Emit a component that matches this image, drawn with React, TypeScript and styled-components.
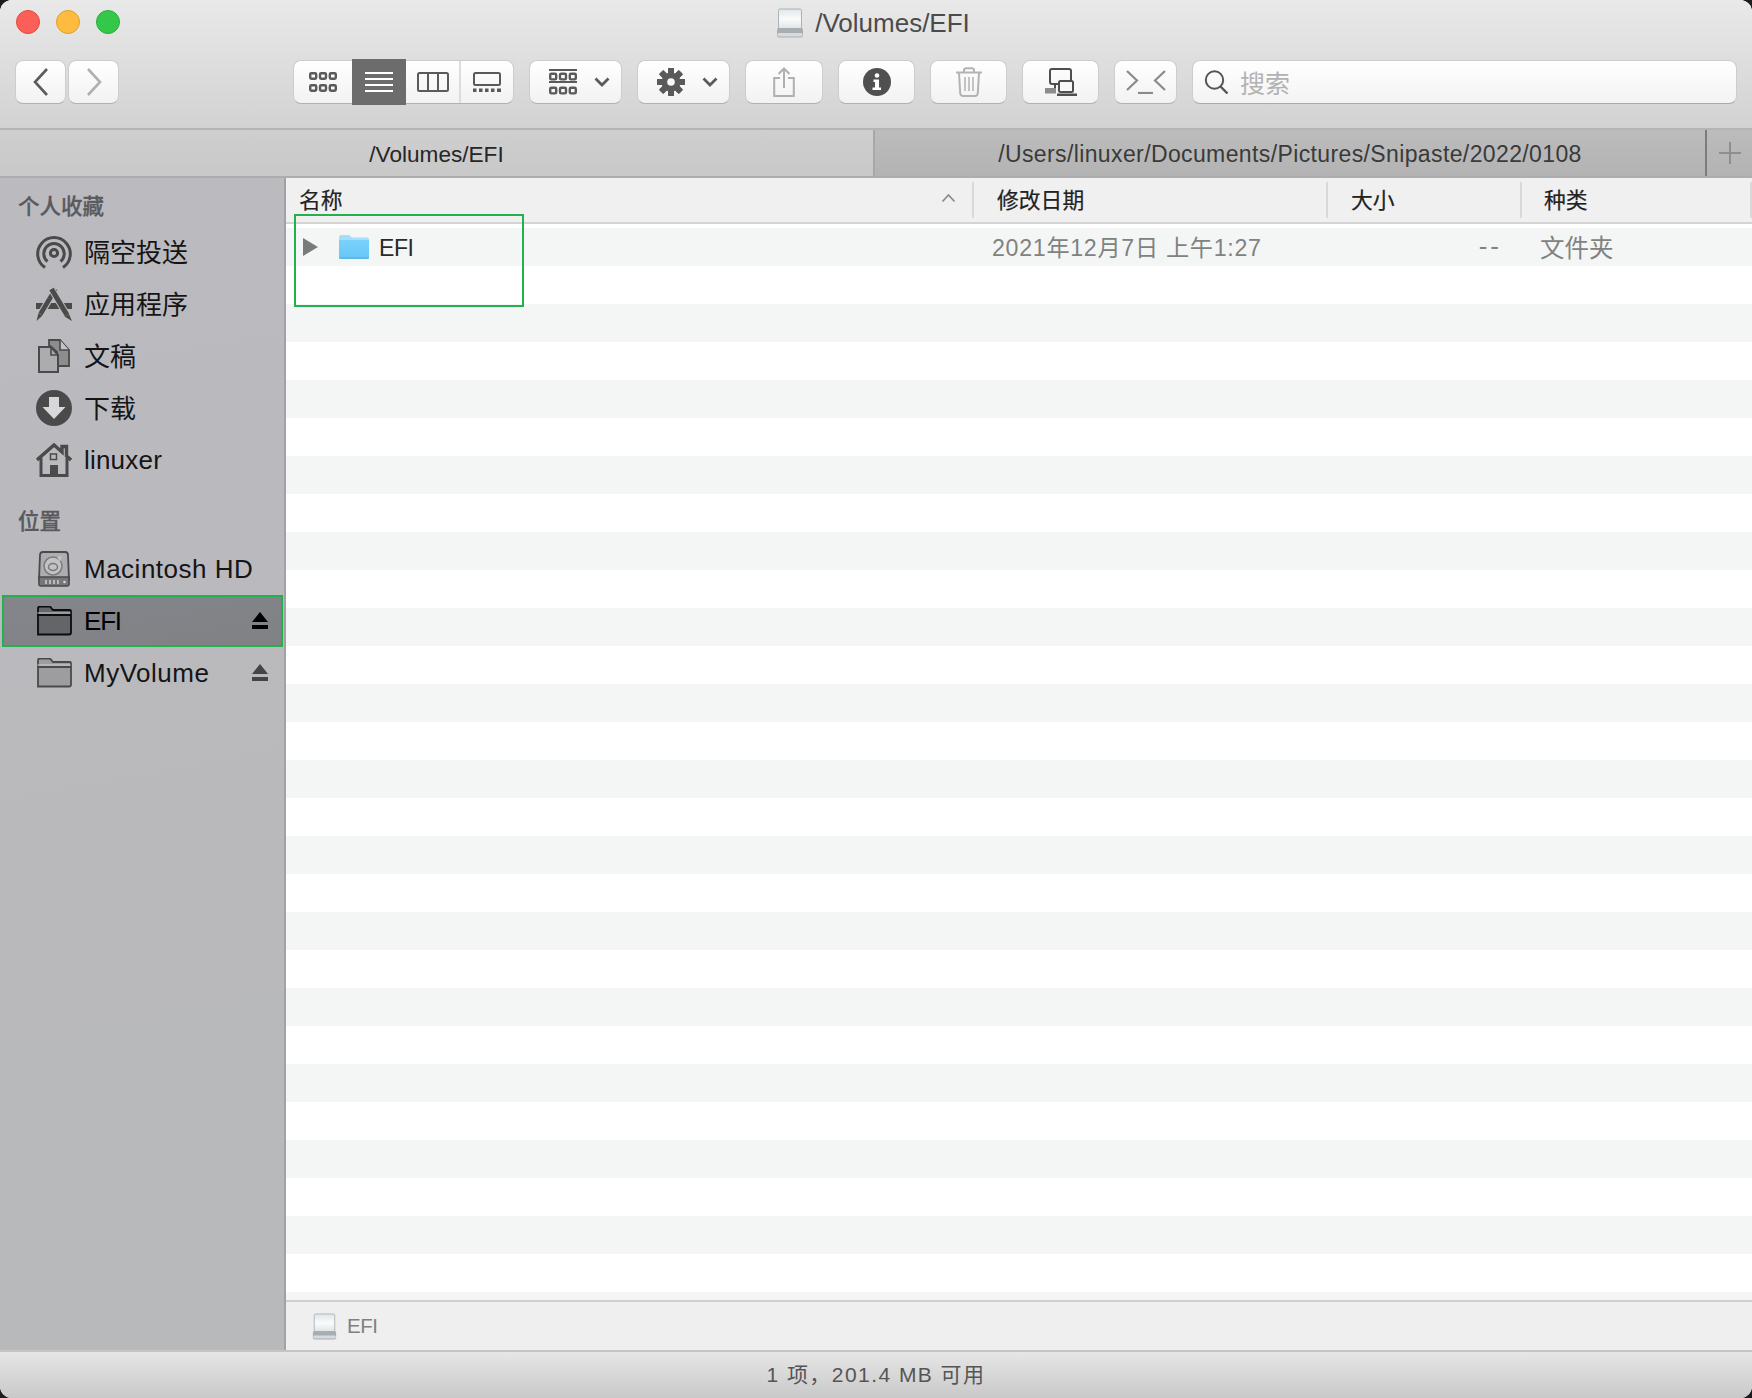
import React from "react";
import styled, { createGlobalStyle } from "styled-components";

const FONT = `"Liberation Sans", "Noto Sans CJK SC", sans-serif`;

const GlobalStyle = createGlobalStyle`
  html, body {
    margin: 0;
    padding: 0;
    background: #1d1d1f;
  }
  body {
    font-family: ${FONT};
  }
`;

const Window = styled.div`
  width: 1752px;
  height: 1398px;
  border-radius: 12px;
  overflow: hidden;
  display: flex;
  flex-direction: column;
  background: #fff;
  position: relative;
`;

const TitleBar = styled.div`
  height: 130px;
  box-sizing: border-box;
  flex: none;
  background: linear-gradient(#e9e9e9, #d2d2d2);
  border-bottom: 2px solid #b4b4b4;
`;

const TitleRow = styled.div`
  height: 46px;
  display: grid;
  grid-template-columns: 1fr auto 1fr;
  align-items: center;
  padding-left: 16px;
`;

const Lights = styled.div`
  display: flex;
  gap: 16px;
  margin-top: -2px;
`;

const Light = styled.span<{ $c: string; $b: string }>`
  width: 24px;
  height: 24px;
  border-radius: 50%;
  box-sizing: border-box;
  background: ${(p) => p.$c};
  border: 1px solid ${(p) => p.$b};
`;

const Title = styled.div`
  display: flex;
  align-items: center;
  gap: 11px;
  font-size: 26px;
  color: #4b4b4b;
  margin-right: 22px;
`;

const Toolbar = styled.div`
  display: flex;
  gap: 15px;
  padding: 14px 15px 0 15px;
  align-items: flex-start;
`;

const NavGroup = styled.div`
  display: flex;
  gap: 2px;
  margin-right: 159px;
`;

const Btn = styled.div<{ $w: number; $gap?: number; $shift?: number }>`
  width: ${(p) => p.$w}px;
  height: 44px;
  box-sizing: border-box;
  flex: none;
  display: flex;
  align-items: center;
  justify-content: center;
  gap: ${(p) => p.$gap || 0}px;
  padding-left: ${(p) => p.$shift || 0}px;
  border-radius: 8px;
  background: linear-gradient(#ffffff, #f2f2f2);
  border: 1px solid #cdcdcd;
  border-bottom-color: #b2b2b2;
`;

const Segments = styled.div`
  display: flex;
  width: 221px;
  height: 44px;
  box-sizing: border-box;
  border-radius: 8px;
  background: linear-gradient(#ffffff, #f2f2f2);
  border: 1px solid #cdcdcd;
  border-bottom-color: #b2b2b2;
`;

const Segment = styled.div<{ $w: number; $on?: boolean; $sep?: boolean }>`
  width: ${(p) => p.$w}px;
  flex: none;
  display: flex;
  align-items: center;
  justify-content: center;
  box-sizing: border-box;
  ${(p) => (p.$on ? "background: #6c6c6c; margin: -2px 0; height: 46px;" : "")}
  ${(p) => (p.$sep ? "border-left: 2px solid #dcdcdc;" : "")}
`;

const Search = styled.div`
  flex: 1;
  height: 44px;
  box-sizing: border-box;
  display: flex;
  align-items: center;
  gap: 10px;
  padding-left: 11px;
  border-radius: 8px;
  background: linear-gradient(#ffffff, #f3f3f3);
  border: 1px solid #cdcdcd;
  border-bottom-color: #a9a9a9;
  color: #b2b2b2;
  font-size: 25px;
`;

const Tabs = styled.div`
  height: 48px;
  flex: none;
  box-sizing: border-box;
  display: flex;
  border-bottom: 2px solid #adadad;
`;

const Tab = styled.div<{ $w: string; $active?: boolean }>`
  width: ${(p) => p.$w};
  box-sizing: border-box;
  display: flex;
  align-items: center;
  justify-content: center;
  padding-top: 3px;
  font-size: ${(p) => (p.$active ? "22.6px" : "23px")};
  letter-spacing: ${(p) => (p.$active ? "0" : "0.38px")};
  color: ${(p) => (p.$active ? "#262626" : "#3a3a3a")};
  background: ${(p) => (p.$active ? "linear-gradient(#cfcfcf, #c8c8c8)" : "linear-gradient(#bcbcbc, #b3b3b3)")};
  ${(p) => (p.$active ? "border-right: 2px solid #a8a8a8;" : "")}
`;

const AddTab = styled.div`
  flex: 1;
  box-sizing: border-box;
  display: flex;
  align-items: center;
  justify-content: center;
  background: linear-gradient(#bcbcbc, #b3b3b3);
  border-left: 2px solid #7c7c7c;
`;

const Body = styled.div`
  flex: 1;
  min-height: 0;
  display: flex;
`;

const Sidebar = styled.div`
  width: 286px;
  flex: none;
  box-sizing: border-box;
  border-right: 2px solid #a2a2a5;
  background: linear-gradient(170deg, #bbbabf, #b8b9ba);
`;

const SectionTitle = styled.div<{ $h: number; $top: number }>`
  height: ${(p) => p.$h}px;
  box-sizing: border-box;
  padding: ${(p) => p.$top}px 0 0 18px;
  display: flex;
  align-items: center;
  font-size: 21.5px;
  font-weight: 500;
  color: #5a5a5e;
  -webkit-text-stroke: 0.3px #5a5a5e;
`;

const SideRow = styled.div<{ $on?: boolean }>`
  height: 52px;
  box-sizing: border-box;
  margin: 0 1px 0 2px;
  padding: 0 15px 0 34px;
  display: flex;
  align-items: center;
  font-size: 26px;
  color: #151515;
  ${(p) =>
    p.$on
      ? `background: linear-gradient(170deg, #85868b, #808185);
         outline: 2px solid #22b14c;
         outline-offset: -2px;
         color: #000;`
      : ""}
`;

const SideIcon = styled.div`
  width: 36px;
  height: 36px;
  flex: none;
  margin-right: 12px;
  display: flex;
  align-items: center;
  justify-content: center;
`;

// CJK glyphs of the fallback font sit a little low next to the icons
const SideLabel = styled.span<{ $cjk?: boolean; $ls?: number }>`
  flex: 1;
  letter-spacing: ${(p) => (p.$ls !== undefined ? p.$ls : 0.5)}px;
  padding-bottom: ${(p) => (p.$cjk ? 4 : 0)}px;
`;

const COLS = "688px 354px 194px 1fr";

const Main = styled.div`
  flex: 1;
  min-width: 0;
  display: flex;
  flex-direction: column;
`;

const HeaderRow = styled.div`
  height: 46px;
  flex: none;
  box-sizing: border-box;
  display: grid;
  grid-template-columns: ${COLS};
  align-items: center;
  background: #f0f0f0;
  border-bottom: 2px solid #d4d4d4;
`;

const HeaderCell = styled.div<{ $pad: number }>`
  height: 36px;
  box-sizing: border-box;
  display: flex;
  align-items: center;
  justify-content: space-between;
  padding: 0 16px 4px ${(p) => p.$pad}px;
  border-right: 2px solid #d9d9d9;
  font-size: 21.8px;
  color: #222;
  -webkit-text-stroke: 0.2px #222;
`;

const Rows = styled.div`
  flex: 1;
  min-height: 0;
  overflow: hidden;
  padding-top: 4px;
`;

const Row = styled.div<{ $odd: boolean }>`
  height: 38px;
  display: grid;
  grid-template-columns: ${COLS};
  align-items: center;
  background: ${(p) => (p.$odd ? "#f4f6f5" : "#ffffff")};
`;

const NameCell = styled.div`
  display: flex;
  align-items: center;
  padding-left: 17px;
  font-size: 23px;
  color: #2a2a2a;
`;

const NameText = styled.span`
  padding-top: 2px;
  letter-spacing: -0.4px;
`;

const GrayCell = styled.div<{ $pad?: number; $right?: number; $ls?: number; $size?: number }>`
  font-size: ${(p) => p.$size || 23.2}px;
  letter-spacing: ${(p) => p.$ls || 0}px;
  color: #808282;
  white-space: nowrap;
  padding-left: ${(p) => p.$pad || 0}px;
  padding-right: ${(p) => p.$right || 0}px;
  padding-bottom: 2px;
  text-align: ${(p) => (p.$right ? "right" : "left")};
`;

const PathBar = styled.div`
  height: 50px;
  flex: none;
  box-sizing: border-box;
  display: flex;
  align-items: center;
  gap: 10px;
  padding-left: 26px;
  border-top: 2px solid #cdcfcf;
  background: #efefef;
  font-size: 20.5px;
  letter-spacing: -0.5px;
  color: #808080;
`;

const StatusBar = styled.div`
  height: 48px;
  flex: none;
  box-sizing: border-box;
  display: flex;
  align-items: center;
  justify-content: center;
  padding-bottom: 4px;
  border-top: 2px solid #c4c4c4;
  background: linear-gradient(#e6e6e6, #c9c9c9);
  font-size: 21px;
  letter-spacing: 1.45px;
  color: #555;
`;

const Highlight = styled.div`
  position: absolute;
  left: 294px;
  top: 214px;
  width: 230px;
  height: 93px;
  box-sizing: border-box;
  border: 2px solid #22b14c;
`;

const ICON = "#5a5a5a";

function Disk({ w, h }: { w: number; h: number }) {
  return (
    <svg width={w} height={h} viewBox="0 0 28 30">
      <defs>
        <linearGradient id="dk" x1="0" y1="0" x2="0" y2="1">
          <stop offset="0" stopColor="#dfe6e8" />
          <stop offset="0.5" stopColor="#fafbfb" />
          <stop offset="1" stopColor="#dfe3e5" />
        </linearGradient>
      </defs>
      <path d="M4 1h20a1.500 1.500 0 0 1 1.500 1.500V21h-23V2.500A1.500 1.500 0 0 1 4 1z" fill="url(#dk)" stroke="#a9b2b6" strokeWidth="1" />
      <path d="M2 20h24l1 2v5.500a2 2 0 0 1-2 2H3a2 2 0 0 1-2-2V22z" fill="#a8adb0" />
      <rect x="1.500" y="25" width="25" height="3.500" rx="1.500" fill="#d5dcdf" />
    </svg>
  );
}

function Back({ color }: { color: string }) {
  return (
    <svg width="18" height="30" viewBox="0 0 18 30">
      <path d="M15 2L3 15l12 13" fill="none" stroke={color} strokeWidth="2.600" />
    </svg>
  );
}

function Forward({ color }: { color: string }) {
  return (
    <svg width="18" height="30" viewBox="0 0 18 30">
      <path d="M3 2l12 13L3 28" fill="none" stroke={color} strokeWidth="2.600" />
    </svg>
  );
}

function Chevron() {
  return (
    <svg width="16" height="10" viewBox="0 0 16 10">
      <path d="M1.500 1.500L8 8l6.500-6.500" fill="none" stroke={ICON} strokeWidth="2.800" />
    </svg>
  );
}

function SixBoxes({ y = 0 }: { y?: number }) {
  const xs = [1.200, 11, 20.800];
  return (
    <g fill="none" stroke={ICON} strokeWidth="2.400">
      {xs.map((x) => (
        <rect key={x} x={x} y={y} width="6" height="5.600" rx="1.200" />
      ))}
    </g>
  );
}

function IconGrid() {
  return (
    <svg width="28" height="20" viewBox="0 0 28 20">
      <SixBoxes y={1.200} />
      <SixBoxes y={13.200} />
    </svg>
  );
}

function IconList() {
  return (
    <svg width="28" height="20" viewBox="0 0 28 20">
      <path d="M0 1h28M0 7h28M0 13h28M0 19h28" stroke="#fff" strokeWidth="1.800" />
    </svg>
  );
}

function IconColumns() {
  return (
    <svg width="32" height="20" viewBox="0 0 32 20">
      <rect x="1" y="1" width="30" height="18" rx="1.500" fill="none" stroke={ICON} strokeWidth="2" />
      <path d="M11 1v18M21 1v18" stroke={ICON} strokeWidth="2" />
    </svg>
  );
}

function IconGallery() {
  return (
    <svg width="28" height="20" viewBox="0 0 28 20">
      <rect x="1" y="1" width="26" height="12" rx="1.500" fill="none" stroke={ICON} strokeWidth="2" />
      <g fill={ICON}>
        <rect x="0" y="16.500" width="3.500" height="3.500" />
        <rect x="6" y="16.500" width="3.500" height="3.500" />
        <rect x="12" y="16.500" width="3.500" height="3.500" />
        <rect x="18" y="16.500" width="3.500" height="3.500" />
        <rect x="24" y="16.500" width="4" height="3.500" />
      </g>
    </svg>
  );
}

function IconArrange() {
  return (
    <svg width="28" height="26" viewBox="0 0 28 26">
      <path d="M0 1h28M0 13h28" stroke={ICON} strokeWidth="1.800" />
      <SixBoxes y={4.800} />
      <SixBoxes y={18.800} />
    </svg>
  );
}

function IconGear() {
  const teeth = [0, 45, 90, 135, 180, 225, 270, 315];
  return (
    <svg width="28" height="28" viewBox="0 0 28 28">
      <g fill={ICON}>
        {teeth.map((a) => (
          <rect key={a} x="11" y="0" width="6" height="28" rx="1" transform={`rotate(${a} 14 14)`} />
        ))}
      </g>
      <circle cx="14" cy="14" r="9.500" fill={ICON} />
      <circle cx="14" cy="14" r="3.800" fill="#f8f8f8" />
    </svg>
  );
}

function IconShare() {
  return (
    <svg width="22" height="30" viewBox="0 0 22 30">
      <path d="M7 11H1.200v18h19.600V11H15" fill="none" stroke="#b0b0b0" strokeWidth="2" />
      <path d="M11 21V2M5.500 7L11 1.500 16.500 7" fill="none" stroke="#b0b0b0" strokeWidth="2" />
    </svg>
  );
}

function IconInfo() {
  return (
    <svg width="28" height="28" viewBox="0 0 28 28">
      <circle cx="14" cy="14" r="14" fill="#505050" />
      <circle cx="14" cy="7.500" r="2.300" fill="#fff" />
      <path d="M10.500 11.500h5.500v8h2v2.500h-8.500v-2.500h2.500v-5.500h-1.500z" fill="#fff" />
    </svg>
  );
}

function IconTrash() {
  return (
    <svg width="26" height="30" viewBox="0 0 26 30">
      <path d="M0 5.500h26M8 5.500V3.500q0-2.200 2.200-2.200h5.600q2.200 0 2.200 2.200v2" fill="none" stroke="#b3b3b3" strokeWidth="2" />
      <path d="M3 6l1.200 20q.2 3 3 3h11.600q2.800 0 3-3L23 6" fill="none" stroke="#b3b3b3" strokeWidth="2" />
      <path d="M9 10v14M13 10v14M17 10v14" stroke="#b3b3b3" strokeWidth="1.500" />
    </svg>
  );
}

function IconNetwork() {
  return (
    <svg width="32" height="28" viewBox="0 0 32 28">
      <rect x="5" y="1" width="21" height="15" rx="2" fill="none" stroke="#4e4e4e" strokeWidth="2" />
      <path d="M10 16v5" stroke="#4e4e4e" strokeWidth="2" />
      <rect x="0" y="20" width="11" height="5.500" fill="#8c8c8c" />
      <rect x="14" y="13" width="14" height="11" rx="1.500" fill="#f8f8f8" stroke="#4e4e4e" strokeWidth="2" />
      <rect x="12" y="25.500" width="20" height="2.500" fill="#4e4e4e" />
    </svg>
  );
}

function IconTerminal() {
  return (
    <svg width="40" height="24" viewBox="0 0 40 24">
      <g fill="none" stroke="#8a8a8a" strokeWidth="2.200">
        <path d="M1 1l10 9.500L1 20" />
        <path d="M39 1L29 10.500 39 20" />
        <path d="M12 23h15" />
      </g>
    </svg>
  );
}

function IconSearch() {
  return (
    <svg width="26" height="24" viewBox="0 0 26 24">
      <circle cx="10.500" cy="10" r="8.700" fill="none" stroke="#555" strokeWidth="2" />
      <path d="M16.500 16.500l7 7" fill="none" stroke="#555" strokeWidth="2.400" />
    </svg>
  );
}

function IconPlus() {
  return (
    <svg width="22" height="22" viewBox="0 0 22 22">
      <path d="M11 0v22M0 11h22" stroke="#8e8e8e" strokeWidth="2" />
    </svg>
  );
}

const SIDE = "#4a4a4a";
const SIDE_BG = "#bbbabf";

function IconAirdrop() {
  return (
    <svg width="36" height="35" viewBox="0 0 36 35">
      <g fill="none" stroke={SIDE} strokeWidth="3">
        <path d="M9 32.500A16.300 16.300 0 1 1 27 32.500" />
        <path d="M11.500 26.500A10.200 10.200 0 1 1 24.500 26.500" />
        <circle cx="18" cy="18" r="3.600" />
      </g>
    </svg>
  );
}

function IconApps() {
  return (
    <svg width="36" height="34" viewBox="0 0 36 34">
      <path d="M0 16h36v6H0z" fill={SIDE} />
      <path d="M10 22h16l-8-15z" fill={SIDE_BG} />
      <path d="M13.500 16h9l3 6h-15z" fill={SIDE} />
      <path d="M19.500 2L4 28" stroke={SIDE_BG} strokeWidth="7" />
      <path d="M19.500 2L4.500 27" stroke={SIDE} strokeWidth="4.600" />
      <path d="M2.500 26l4 2.500L.5 34z" fill={SIDE} />
      <path d="M15.500 2L31 28" stroke={SIDE_BG} strokeWidth="7" />
      <path d="M15.500 2L31 28" stroke={SIDE} strokeWidth="5" />
      <path d="M28.500 29.500l4.500-2.500 3 7z" fill={SIDE} />
    </svg>
  );
}

function IconDocs() {
  return (
    <svg width="32" height="34" viewBox="0 0 32 34">
      <path d="M11 1h11l9 10v16H19V13l-8-7z" fill="#8d8d90" stroke={SIDE} strokeWidth="1.800" />
      <path d="M22 1v10h9" fill="#c4c4c6" stroke={SIDE} strokeWidth="1.600" />
      <path d="M1 8h12l7 8v17H1z" fill="#acacaf" stroke={SIDE} strokeWidth="2" />
      <path d="M13 8v8h7" fill="none" stroke={SIDE} strokeWidth="1.600" />
    </svg>
  );
}

function IconDownload() {
  return (
    <svg width="36" height="36" viewBox="0 0 36 36">
      <circle cx="18" cy="18" r="18" fill={SIDE} />
      <path d="M13 7h10v10h6.500L18 29 6.500 17H13z" fill="#d8d8da" />
    </svg>
  );
}

function IconHome() {
  return (
    <svg width="36" height="34" viewBox="0 0 36 34">
      <path d="M1 17L18 2l8 7V3.500h4.500v9.500L35 17" fill="none" stroke={SIDE} strokeWidth="3.400" />
      <path d="M5 15v17.500h26V15" fill="none" stroke={SIDE} strokeWidth="3" />
      <rect x="14.500" y="11" width="6" height="5.500" fill="none" stroke={SIDE} strokeWidth="1.500" />
      <rect x="14" y="22" width="8" height="11" fill={SIDE} />
    </svg>
  );
}

function IconHD() {
  return (
    <svg width="32" height="36" viewBox="0 0 32 36">
      <path d="M5 1h22q3 0 3 3l1 25H1l1-25q0-3 3-3z" fill="#adadaf" stroke={SIDE} strokeWidth="1.800" />
      <path d="M1 26h30v7q0 2-2 2H3q-2 0-2-2z" fill="#77777a" stroke={SIDE} strokeWidth="1.600" />
      <circle cx="15" cy="15" r="9" fill="#c2c2c4" stroke="#7a7a7c" strokeWidth="1.500" />
      <ellipse cx="15" cy="16" rx="4.500" ry="3.500" fill="none" stroke="#77777a" strokeWidth="1.500" />
      <path d="M19 6l5-1-2 6z" fill="#c2c2c4" />
      <path d="M8 29v4M12 29v4M16 29v4M20 29v4" stroke="#cfcfd1" strokeWidth="1.500" />
      <circle cx="26.500" cy="31" r="1.300" fill="#d6d6d8" />
    </svg>
  );
}

function IconFolder({ fill, line }: { fill: string; line: string }) {
  return (
    <svg width="36" height="30" viewBox="0 0 36 30">
      <path d="M2 29V3q0-2 2-2h10l3 3.500h17q1 0 1 1.500v21q0 2-2 2z" fill={fill} stroke={line} strokeWidth="1.800" transform="translate(0 -0.500)" />
      <path d="M1 9h34" stroke={line} strokeWidth="1.800" />
      <path d="M1.500 7h33" stroke="#d0d0d2" strokeWidth="1" />
    </svg>
  );
}

function Eject({ color }: { color: string }) {
  return (
    <svg width="16" height="18" viewBox="0 0 16 18">
      <path d="M8 0l8 10H0z" fill={color} />
      <rect x="0" y="13" width="16" height="4" fill={color} />
    </svg>
  );
}

function SortUp() {
  return (
    <svg width="15" height="10" viewBox="0 0 15 10">
      <path d="M1.500 8.500l6-6.500 6 6.500" fill="none" stroke="#8b8b8b" strokeWidth="1.800" />
    </svg>
  );
}

function Disclosure() {
  return (
    <svg width="15" height="18" viewBox="0 0 15 18">
      <path d="M0 0l15 9L0 18z" fill="#7a7a7a" />
    </svg>
  );
}

const RowFolderWrap = styled.span`
  display: flex;
  margin: 0 10px 0 21px;
`;

function BlueFolder() {
  return (
    <svg width="30" height="24" viewBox="0 0 30 24">
      <defs>
        <linearGradient id="bf" x1="0" y1="0" x2="0" y2="1">
          <stop offset="0" stopColor="#79d2fb" />
          <stop offset="1" stopColor="#67c6f8" />
        </linearGradient>
      </defs>
      <path d="M0 2q0-2 2-2h8l3 2.500h15q2 0 2 2V22q0 2-2 2H2q-2 0-2-2z" fill="#a5defa" />
      <path d="M0 5h30v17q0 2-2 2H2q-2 0-2-2z" fill="url(#bf)" />
      <path d="M0 23h30" stroke="#58a9d6" strokeWidth="1" />
    </svg>
  );
}

const favorites = [
  { label: "隔空投送", icon: <IconAirdrop />, cjk: true },
  { label: "应用程序", icon: <IconApps />, cjk: true },
  { label: "文稿", icon: <IconDocs />, cjk: true },
  { label: "下载", icon: <IconDownload />, cjk: true },
  { label: "linuxer", icon: <IconHome />, cjk: false },
];

export default function App() {
  const rows = Array.from({ length: 29 }, (_, i) => i);
  return (
    <Window>
      <GlobalStyle />
      <TitleBar>
        <TitleRow>
          <Lights>
            <Light $c="#fc5f58" $b="#e2483f" />
            <Light $c="#fdbc3f" $b="#e09e2a" />
            <Light $c="#34c84a" $b="#28ae38" />
          </Lights>
          <Title>
            <Disk w={28} h={30} />
            /Volumes/EFI
          </Title>
          <div />
        </TitleRow>
        <Toolbar>
          <NavGroup>
            <Btn $w={51}>
              <Back color="#5b5b5b" />
            </Btn>
            <Btn $w={51}>
              <Forward color="#b0b0b0" />
            </Btn>
          </NavGroup>
          <Segments>
            <Segment $w={58}>
              <IconGrid />
            </Segment>
            <Segment $w={54} $on>
              <IconList />
            </Segment>
            <Segment $w={53}>
              <IconColumns />
            </Segment>
            <Segment $w={54} $sep>
              <IconGallery />
            </Segment>
          </Segments>
          <Btn $w={93} $gap={17} $shift={8}>
            <IconArrange />
            <Chevron />
          </Btn>
          <Btn $w={93} $gap={17} $shift={8}>
            <IconGear />
            <Chevron />
          </Btn>
          <Btn $w={78}>
            <IconShare />
          </Btn>
          <Btn $w={77}>
            <IconInfo />
          </Btn>
          <Btn $w={77}>
            <IconTrash />
          </Btn>
          <Btn $w={77}>
            <IconNetwork />
          </Btn>
          <Btn $w={63}>
            <IconTerminal />
          </Btn>
          <Search>
            <IconSearch />
            搜索
          </Search>
        </Toolbar>
      </TitleBar>
      <Tabs>
        <Tab $w="875px" $active>
          /Volumes/EFI
        </Tab>
        <Tab $w="830px">/Users/linuxer/Documents/Pictures/Snipaste/2022/0108</Tab>
        <AddTab>
          <IconPlus />
        </AddTab>
      </Tabs>
      <Body>
        <Sidebar>
          <SectionTitle $h={48} $top={5}>
            个人收藏
          </SectionTitle>
          {favorites.map((f) => (
            <SideRow key={f.label}>
              <SideIcon>{f.icon}</SideIcon>
              <SideLabel $cjk={f.cjk} $ls={f.cjk ? 0 : 0.2}>
                {f.label}
              </SideLabel>
            </SideRow>
          ))}
          <SectionTitle $h={57} $top={9}>
            位置
          </SectionTitle>
          <SideRow>
            <SideIcon>
              <IconHD />
            </SideIcon>
            <SideLabel>Macintosh HD</SideLabel>
          </SideRow>
          <SideRow $on>
            <SideIcon>
              <IconFolder fill="#646569" line="#0c0c0c" />
            </SideIcon>
            <SideLabel $ls={-1.2}>EFI</SideLabel>
            <Eject color="#000" />
          </SideRow>
          <SideRow>
            <SideIcon>
              <IconFolder fill="#9d9da0" line="#4a4a4a" />
            </SideIcon>
            <SideLabel $ls={0.5}>MyVolume</SideLabel>
            <Eject color="#444" />
          </SideRow>
        </Sidebar>
        <Main>
          <HeaderRow>
            <HeaderCell $pad={13}>
              名称
              <SortUp />
            </HeaderCell>
            <HeaderCell $pad={23}>修改日期</HeaderCell>
            <HeaderCell $pad={23}>大小</HeaderCell>
            <HeaderCell $pad={22}>种类</HeaderCell>
          </HeaderRow>
          <Rows>
            {rows.map((i) => (
              <Row key={i} $odd={i % 2 === 0}>
                {i === 0 && (
                  <>
                    <NameCell>
                      <Disclosure />
                      <RowFolderWrap>
                        <BlueFolder />
                      </RowFolderWrap>
                      <NameText>EFI</NameText>
                    </NameCell>
                    <GrayCell $pad={18} $ls={0.7}>
                      2021年12月7日 上午1:27
                    </GrayCell>
                    <GrayCell $right={20} $ls={3} $size={26}>
                      --
                    </GrayCell>
                    <GrayCell $pad={18} $size={24.5}>
                      文件夹
                    </GrayCell>
                  </>
                )}
              </Row>
            ))}
          </Rows>
          <PathBar>
            <Disk w={25} h={27} />
            EFI
          </PathBar>
        </Main>
      </Body>
      <StatusBar>1 项，201.4 MB 可用</StatusBar>
      <Highlight />
    </Window>
  );
}
